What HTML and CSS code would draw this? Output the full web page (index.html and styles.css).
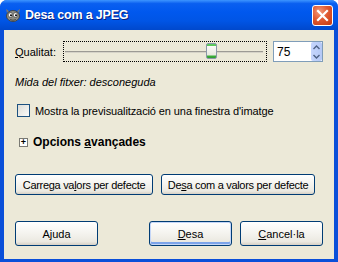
FILE: index.html
```html
<!DOCTYPE html>
<html lang="ca">
<head>
    <meta charset="UTF-8">
    <title>Desa com a JPEG</title>
    <link rel="stylesheet" href="styles.css">
</head>
<body>
    <div class="window">
        <div class="titlebar">
            <svg class="app-icon" width="16" height="16" viewBox="0 0 16 16">
                <path d="M2 6 L1 2 L4 4 Z" fill="#7a7a72"/>
                <path d="M14 6 L15 2 L12 4 Z" fill="#7a7a72"/>
                <ellipse cx="8" cy="9" rx="6.5" ry="5.5" fill="#8c8c84" stroke="#3c3c38" stroke-width="0.8"/>
                <circle cx="5.5" cy="8" r="2.3" fill="#fff" stroke="#333" stroke-width="0.6"/>
                <circle cx="10.5" cy="8" r="2.3" fill="#fff" stroke="#333" stroke-width="0.6"/>
                <circle cx="6" cy="8.3" r="1" fill="#000"/>
                <circle cx="11" cy="8.3" r="1" fill="#000"/>
                <path d="M5 12.5 Q8 14 11 12.5" stroke="#3c3c38" stroke-width="0.8" fill="none"/>
            </svg>
            <span class="title">Desa com a JPEG</span>
            <button class="close-btn" aria-label="Tanca">
                <svg width="13" height="13" viewBox="0 0 13 13">
                    <path d="M2 2 L11 11 M11 2 L2 11" stroke="#fff" stroke-width="2.2" stroke-linecap="square"/>
                </svg>
            </button>
        </div>
        <div class="content">
            <div class="quality-row">
                <label class="quality-label"><u>Q</u>ualitat:</label>
                <div class="slider">
                    <div class="track"></div>
                    <div class="thumb"></div>
                </div>
                <div class="spin">
                    <span class="spin-value">75</span>
                    <div class="spin-buttons">
                        <svg width="11" height="20" viewBox="0 0 11 20">
                            <path d="M2.5 7 L5.5 4 L8.5 7" stroke="#4d6185" stroke-width="1.4" fill="none"/>
                            <path d="M2.5 13 L5.5 16 L8.5 13" stroke="#4d6185" stroke-width="1.4" fill="none"/>
                        </svg>
                    </div>
                </div>
            </div>
            <p class="file-size">Mida del fitxer: desconeguda</p>
            <label class="check-row">
                <span class="checkbox"></span>
                <span>Mostra la previsualització en una finestra d'imatge</span>
            </label>
            <div class="expander">
                <span class="expander-box">+</span>
                <span>Opcions <u>a</u>vançades</span>
            </div>
            <div class="defaults-row">
                <button class="btn btn-load">Carrega va<u>l</u>ors per defecte</button>
                <button class="btn btn-save">De<u>s</u>a com a valors per defecte</button>
            </div>
            <div class="actions-row">
                <button class="btn btn-big">Ajuda</button>
                <div class="actions-right">
                    <button class="btn btn-big btn-default"><u>D</u>esa</button>
                    <button class="btn btn-big"><u>C</u>ancel·la</button>
                </div>
            </div>
        </div>
    </div>
</body>
</html>
```

FILE: styles.css
```css
body {
    margin: 0;
    background: #fff;
    font-family: 'Liberation Sans', Arial, sans-serif;
    font-size: 11px;
    color: #000;
}

.window {
    width: 338px;
    height: 262px;
    box-sizing: border-box;
    display: flex;
    flex-direction: column;
    background: #0a4fd9;
    border-radius: 7px 7px 0 0;
    overflow: hidden;
}

.titlebar {
    height: 30px;
    flex: none;
    display: flex;
    align-items: center;
    padding: 0 5px 0 5px;
    background: linear-gradient(to bottom, #3d95ff 0%, #0a5ff0 12%, #0058ee 40%, #0055e5 70%, #0048cc 100%);
}

.app-icon {
    margin-right: 4px;
    margin-top: -1px;
}

.title {
    flex: 1;
    color: #fff;
    font-weight: bold;
    font-size: 12.5px;
    letter-spacing: -0.2px;
    text-shadow: 1px 1px 0 #0a1e7a;
}

.close-btn {
    width: 21px;
    height: 21px;
    padding: 0;
    border: 1px solid #fff;
    border-radius: 3px;
    background: radial-gradient(circle at 35% 30%, #f29a7c 0%, #e05a32 45%, #c4380f 100%);
    display: flex;
    align-items: center;
    justify-content: center;
}

.content {
    flex: 1;
    margin: 0 4px 3px 4px;
    background: #ece9d8;
    padding: 11px 11px 0 11px;
    display: flex;
    flex-direction: column;
}

.quality-row {
    display: flex;
    align-items: center;
    height: 21px;
}

.quality-label {
    width: 48px;
}

.slider {
    position: relative;
    width: 204px;
    height: 21px;
    box-sizing: border-box;
    border: 1px dotted #000;
}

.track {
    position: absolute;
    left: 1px;
    right: 3px;
    top: 9px;
    height: 1px;
    background: #9c9a94;
    border-bottom: 1px solid #d6d3c8;
}

.thumb {
    position: absolute;
    left: 142px;
    top: 1px;
    width: 9px;
    height: 14px;
    border: 1px solid #8a98a8;
    border-radius: 2px;
    background: linear-gradient(to bottom, #5cc85c 0, #5cc85c 2px, #fbfbf8 2px, #e8e8e0 11px, #3ab03a 12px, #2f9a2f 14px);
}

.spin {
    margin-left: 6px;
    width: 50px;
    height: 21px;
    box-sizing: border-box;
    border: 1px solid #7f9db9;
    background: #fff;
    display: flex;
    align-items: center;
}

.spin-value {
    flex: 1;
    padding-left: 3px;
    font-size: 12px;
}

.spin-buttons {
    width: 11px;
    height: 19px;
    background: linear-gradient(to right, #c6d6fd, #b4c8f6);
    border-radius: 2px;
    display: flex;
    overflow: hidden;
}

.file-size {
    margin: 14px 0 0 0;
    font-style: italic;
}

.check-row {
    margin-top: 16px;
    display: flex;
    align-items: center;
    gap: 5px;
    padding-left: 2px;
    letter-spacing: -0.1px;
}

.checkbox {
    width: 11px;
    height: 11px;
    border: 1px solid #1c5180;
    background: linear-gradient(135deg, #dcdcd7, #fbfbf9);
}

.expander {
    margin-top: 18px;
    display: flex;
    align-items: center;
    gap: 5px;
    padding-left: 4px;
    font-weight: bold;
    font-size: 12px;
}

.expander-box {
    width: 7px;
    height: 7px;
    border: 1px solid #7a7a74;
    background: #fff;
    font-size: 9px;
    line-height: 7px;
    text-align: center;
    font-weight: bold;
}

.defaults-row {
    margin-top: 25px;
    display: flex;
    gap: 8px;
}

.btn {
    font-family: 'Liberation Sans', Arial, sans-serif;
    font-size: 11px;
    color: #000;
    height: 21px;
    padding: 0;
    white-space: nowrap;
    border: 1px solid #003c74;
    border-radius: 3px;
    background: linear-gradient(to bottom, #ffffff 0%, #f4f3ee 50%, #ebe9e1 85%, #d6d0c5 100%);
}

.btn-load {
    width: 138px;
    letter-spacing: -0.3px;
}

.btn-save {
    width: 154px;
    letter-spacing: -0.3px;
}

.actions-row {
    margin-top: 26px;
    display: flex;
    justify-content: space-between;
}

.actions-right {
    display: flex;
    gap: 8px;
}

.btn-big {
    width: 83px;
    height: 25px;
}

.btn-default {
    box-shadow: inset 0 0 0 1px #c4d6f7, inset 0 -2px 0 1px #7ca4ea;
}
```
